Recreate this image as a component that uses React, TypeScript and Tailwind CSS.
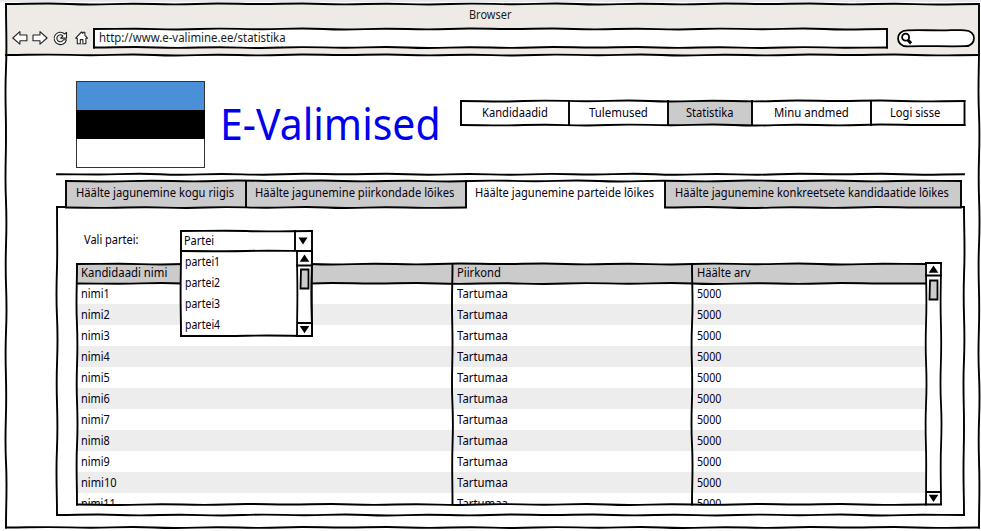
import { useLayoutEffect, useRef, useState, type ReactNode } from "react";
import clsx from "clsx";

/** A label squeezed or stretched horizontally to an exact width. */
function Label({ w, children, className }: { w: number; children: string; className?: string }) {
  const ref = useRef<HTMLSpanElement>(null);
  const [scale, setScale] = useState(1);
  useLayoutEffect(() => {
    if (ref.current) setScale(w / ref.current.offsetWidth);
  }, [w]);
  return (
    <span className={clsx("block shrink-0 whitespace-nowrap", className)} style={{ width: w }}>
      <span ref={ref} className="inline-block origin-left" style={{ transform: `scaleX(${scale})` }}>
        {children}
      </span>
    </span>
  );
}

const WOBBLE = [0, -0.5, 0.4, -0.3, 0.5, -0.4, 0.2, -0.5, 0.5, -0.3, 0.4, -0.5];

/** Path of a hand-drawn line between two points. */
function rough(x1: number, y1: number, x2: number, y2: number, seed = 0) {
  const len = Math.hypot(x2 - x1, y2 - y1);
  const n = Math.max(1, Math.round(len / 42));
  const horizontal = Math.abs(x2 - x1) > Math.abs(y2 - y1);
  const amp = len < 30 ? 0.3 : 1;
  let d = `M${x1} ${y1}`;
  let px = x1;
  let py = y1;
  for (let i = 1; i <= n; i++) {
    const o = i === n ? 0 : WOBBLE[(i + seed) % WOBBLE.length] * amp;
    const x = x1 + ((x2 - x1) * i) / n + (horizontal ? 0 : o);
    const y = y1 + ((y2 - y1) * i) / n + (horizontal ? o : 0);
    d += horizontal
      ? `C${(px + x) / 2} ${py} ${(px + x) / 2} ${y} ${x} ${y}`
      : `C${px} ${(py + y) / 2} ${x} ${(py + y) / 2} ${x} ${y}`;
    px = x;
    py = y;
  }
  return d;
}

type Seg = [number, number, number, number];

/** Ink lines laid over the parent box. */
function Ink({ lines, seed = 0, width = 1.9 }: { lines: Seg[]; seed?: number; width?: number }) {
  return (
    <svg
      className="pointer-events-none absolute inset-0 size-full overflow-visible"
      fill="none"
      stroke="#000"
      strokeWidth={width}
      strokeLinecap="square"
    >
      {lines.map((l, i) => (
        <path key={i} d={rough(...l, seed + i * 5)} />
      ))}
    </svg>
  );
}

const box = (w: number, h: number): Seg[] => [
  [0, 0, w, 0],
  [w, 0, w, h],
  [0, h, w, h],
  [0, 0, 0, h],
];

function Toolbar() {
  return (
    <div className="flex h-[26px] items-center">
      <svg className="ml-[6px] h-4 w-[78px] shrink-0" viewBox="0.5 0 78 16" fill="#fff" stroke="#222" strokeWidth="1.1" strokeLinejoin="round">
        <path d="M1.3 8 8.4 1.7V5h7v5.8h-7v3.4Z" />
        <path d="M35.6 8 28.5 1.7V5h-7v5.8h7v3.4Z" />
        <path d="M55 2.3V8.1H49.2L51.4 5.9A3.5 3.5 0 1 0 52 9.8H54.9A6.2 6.2 0 1 1 53.2 4Z" />
        <path d="M64.2 8.2 70 2l1.4 1.4V2.2h2v3.2l2.6 2.8h-1.6v5.6h-8.6V8.2Z" />
        <path d="M68.8 13.7V9.6h2.6v4.1" />
      </svg>
      <div className="relative ml-[4px] flex h-[19px] w-[793px] items-center bg-white pl-[5px]">
        <Ink lines={box(793, 18.5)} seed={2} />
        <Label w={187}>http://www.e-valimine.ee/statistika</Label>
      </div>
      <svg className="ml-[9px] h-[20px] w-[80px] shrink-0" viewBox="0 0 80 20" fill="none" stroke="#000" strokeWidth="1.8">
        <path d="M11 2.4C25 1.6 40 2.9 55 2.2 62 1.8 66 2.4 69 2.3 81 2.5 81 18.2 69 18.2 50 18.7 30 17.7 11 18.3-1 18.2-.8 2.6 11 2.4Z" fill="#fff" />
        <circle cx="9.6" cy="9.2" r="3.5" />
        <path d="m11.9 12 3.2 3.4" strokeWidth="3" />
      </svg>
    </div>
  );
}

const NAV = [
  { text: "Kandidaadid", w: 66, cell: "w-[108px] pl-[21px]" },
  { text: "Tulemused", w: 59, cell: "w-[99px] pl-[20px]" },
  { text: "Statistika", w: 47, cell: "w-[84px] bg-[#cbcbcb] pl-[18px]" },
  { text: "Minu andmed", w: 75, cell: "w-[119px] pl-[22px]" },
  { text: "Logi sisse", w: 50, cell: "w-[93.5px] pl-[19px]" },
];

const TABS = [
  { text: "Häälte jagunemine kogu riigis", w: 158, cell: "w-[180px] bg-[#cbcbcb] pl-[10px]" },
  { text: "Häälte jagunemine piirkondade lõikes", w: 199, cell: "w-[220px] bg-[#cbcbcb] pl-[9px]" },
  { text: "Häälte jagunemine parteide lõikes", w: 179, cell: "w-[199px] pl-[9px]" },
  { text: "Häälte jagunemine konkreetsete kandidaatide lõikes", w: 274, cell: "w-[296px] bg-[#cbcbcb] pl-[10px]" },
];

function Header() {
  return (
    <header className="flex h-[119px] pl-[70px]">
      <div className="mt-[26px] flex h-[87px] w-[129px] flex-col border border-[#333]">
        <div className="h-[28px] bg-[#4990d8]" />
        <div className="-mx-px h-[29px] bg-black" />
      </div>
      <div className="ml-[18px] mt-[40px] h-[58px] w-[215px] text-[43px] leading-[58px] text-[#0000ee]">
        <Label w={221} className="-ml-[3px]">E-Valimised</Label>
      </div>
      <nav className="relative ml-[23px] mt-[45.5px] flex h-[24px] w-[503.5px] shrink-0">
        {NAV.map((n) => (
          <div key={n.text} className={clsx("flex items-center", n.cell)}>
            <Label w={n.w}>{n.text}</Label>
          </div>
        ))}
        <Ink
          seed={3}
          lines={[...box(503.5, 24), [108, 0, 108, 24], [207, 0, 207, 24], [291, 0, 291, 24], [410, 0, 410, 24]]}
        />
      </nav>
    </header>
  );
}

/** Vertical scrollbar artwork, 15px wide. */
function Scrollbar({ h, top, thumb, bottom }: { h: number; top: number; thumb: number; bottom: number }) {
  return (
    <svg className="pointer-events-none absolute inset-0 size-full overflow-visible" fill="none" stroke="#000" strokeWidth="1.8">
      <path d={rough(0, 0, 0, h, 1)} />
      <path d={rough(15, 0, 15, h, 4)} />
      <path d={`M-1 0H16M-1 ${top}H16M0 ${bottom}H15M-1 ${h}H16`} />
      <path d={`M4 ${thumb}h7.5v19h-8Z`} fill="#cbcbcb" />
      <path d={`M7.5 ${top / 2 - 3.8}l4.8 7.2h-9.6Z`} fill="#000" stroke="none" />
      <path d={`M7.5 ${(h + bottom) / 2 + 3.8}l4.8-7.2h-9.6Z`} fill="#000" stroke="none" />
    </svg>
  );
}

function PartyList() {
  return (
    <div className="absolute left-0 top-[20px] z-10 flex h-[86px] w-[131px] bg-white">
      <ul className="w-[116px] pl-[4px]">
        {["partei1", "partei2", "partei3", "partei4"].map((p) => (
          <li key={p} className="flex h-[21px] items-center">
            <Label w={35}>{p}</Label>
          </li>
        ))}
      </ul>
      <div className="relative w-[15px]">
        <Scrollbar h={85} top={14.5} thumb={18.5} bottom={72} />
      </div>
      <Ink seed={1} lines={box(131, 85)} />
    </div>
  );
}

const NAME_WIDTHS = [29, 29, 29, 29, 29, 29, 29, 29, 29, 36, 35];

function Row({ name, nameW, place, placeW, votes, votesW, className }: {
  name: string; nameW: number; place: string; placeW: number; votes: string; votesW: number; className: string;
}) {
  return (
    <div className={clsx("flex w-[849px] shrink-0 items-center", className)}>
      <div className="w-[375px] pl-[4px]"><Label w={nameW}>{name}</Label></div>
      <div className="w-[240px] pl-[5px]"><Label w={placeW}>{place}</Label></div>
      <div className="pl-[4.5px]"><Label w={votesW}>{votes}</Label></div>
    </div>
  );
}

function Table() {
  return (
    <div className="relative ml-[20px] flex h-[241px] w-[864px]">
      <div className="flex h-[241px] w-[849px] flex-col overflow-hidden">
        <Row name="Kandidaadi nimi" nameW={86} place="Piirkond" placeW={44} votes="Häälte arv" votesW={53} className="h-[19px] bg-[#cbcbcb] pb-[2px]" />
        {NAME_WIDTHS.map((w, i) => (
          <Row
            key={i}
            name={`nimi${i + 1}`}
            nameW={w}
            place="Tartumaa"
            placeW={51}
            votes="5000"
            votesW={24}
            className={clsx("h-[21px]", i % 2 === 1 && "bg-[#ededed]")}
          />
        ))}
      </div>
      <div className="relative -mt-px h-[242px] w-[15px] bg-white">
        <Scrollbar h={241.5} top={12.5} thumb={17.5} bottom={229} />
      </div>
      <Ink
        seed={2}
        lines={[[0, 0, 849, 0], [0, 240.5, 849, 240.5], [0, 0, 0, 240.5], [0, 19.5, 849, 19.5], [375.5, 0, 375.5, 240.5], [615, 0, 615, 240.5]]}
      />
    </div>
  );
}

function Frame({ children }: { children: ReactNode }) {
  return (
    <div className="relative ml-[6px] h-[524px] w-[973px]">
      <div className="relative h-[51px] bg-[#eeebe6] text-[#1c1c1c]">
        <div className="flex h-[21px] items-center pl-[463px]">
          <Label w={42}>Browser</Label>
        </div>
        <Toolbar />
        <Ink seed={4} lines={[[0, 51, 973, 51]]} />
      </div>
      {children}
      <Ink seed={6} lines={box(973, 523.5)} />
    </div>
  );
}

export default function App() {
  return (
    <div className="h-[531px] w-[981px] overflow-hidden bg-white font-['Noto_Sans','Open_Sans',sans-serif] text-[12px] leading-4 text-[#08000c]">
      <div className="h-[4px] border-b-2 border-white bg-[#e9e9ed]" />
      <Frame>
        <Header />
        <div className="relative ml-[51px] h-[6.5px] w-[908px]">
          <Ink seed={5} lines={[[0, 0.3, 907, 0.3]]} />
        </div>
        <div className="relative ml-[60px] flex h-[26.5px] w-[895px]">
          {TABS.map((t) => (
            <div key={t.text} className={clsx("flex shrink-0 items-center pb-px", t.cell)}>
              <Label w={t.w}>{t.text}</Label>
            </div>
          ))}
          <Ink
            seed={7}
            lines={[[0, 0, 895, 0], [0, 0, 0, 26], [180, 0, 180, 26], [400, 0, 400, 26], [599, 0, 599, 26], [895, 0, 895, 26], [0, 26.5, 400, 26.5], [599, 26.5, 895, 26.5]]}
          />
        </div>
        <main className="relative ml-[51px] h-[308px] w-[907px]">
          <div className="flex h-[57px] pl-[27px] pt-[24px]">
            <Label w={55} className="mt-[1px]">Vali partei:</Label>
            <div className="relative ml-[42px] h-[20px] w-[131px] bg-white pl-[3px] pt-[2px]">
              <Label w={30}>Partei</Label>
              <PartyList />
              <Ink seed={8} lines={[[0, 0, 131, 0], [0, 0, 0, 20], [131, 0, 131, 20], [0, 20.5, 131, 20.5], [114, 0, 114, 19]]} />
              <svg className="absolute right-[4px] top-[6px] h-[8px] w-[10px]" viewBox="0 0 10 8">
                <path d="M.5.5h9L5 7.5Z" />
              </svg>
            </div>
          </div>
          <Table />
          <Ink
            seed={9}
            lines={[[0, 0, 9, 0], [904, 0, 907, 0], [907, 0, 907, 308], [0, 308, 907, 308], [0, 0, 0, 308]]}
          />
        </main>
      </Frame>
    </div>
  );
}
